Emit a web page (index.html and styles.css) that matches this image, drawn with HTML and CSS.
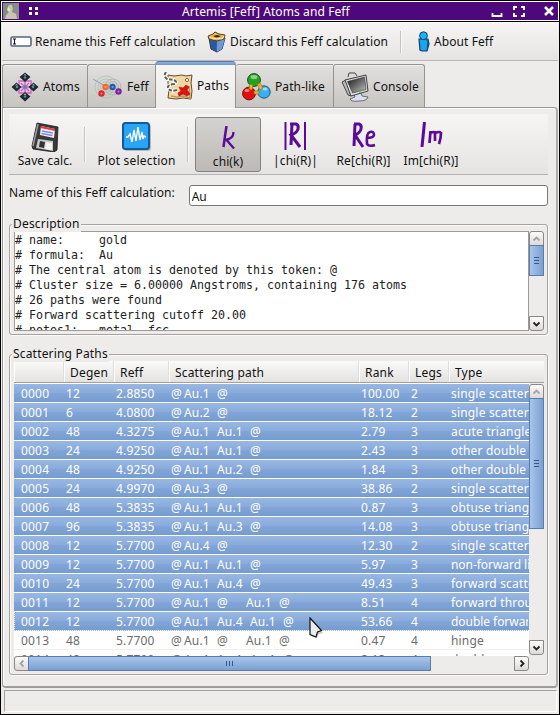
FILE: index.html
```html
<!DOCTYPE html>
<html lang="en">
<head>
<meta charset="utf-8">
<title>Artemis [Feff] Atoms and Feff</title>
<link rel="stylesheet" href="styles.css">
</head>
<body>
<div class="window">
  <header class="titlebar">
    <svg class="avatar" width="16" height="16" viewBox="0 0 16 16"><rect width="16" height="16" fill="#7d8c7c"/><rect x="11" width="5" height="16" fill="#8d8b92"/><path d="M5 3q2-2 4-1l1 4-1 3 4 2 1 5H2l1-4 3-3z" fill="#c9c4b0"/><path d="M5 4l-1 3 2 2 1-3z" fill="#ece6cf"/></svg>
    <svg class="dots" width="10" height="10" viewBox="0 0 10 10"><path d="M1 1h3v3H1zM7 1h3v3H7zM1 6h3v3H1zM7 6h3v3H7z" fill="#fff"/></svg>
    <h1 class="title">Artemis [Feff] Atoms and Feff</h1>
    <svg class="winbtns" width="64" height="12" viewBox="0 0 64 12" fill="none" stroke="#fff" stroke-width="2"><path d="M1.500 8v3h9V8" stroke-width="1.800"/><path d="M23 5V2h3M30 2h3v3M33 8v3h-3M26 11h-3V8" stroke-width="2"/><path d="M54 2l8 8M62 2l-8 8" stroke-width="2.500"/></svg>
  </header>

  <nav class="toolbar">
    <svg class="ic-rename" width="22" height="11" viewBox="0 0 22 11"><rect x="1" y="1" width="20" height="9" rx="1.500" fill="#fff" stroke="#56667f" stroke-width="1.600"/><path d="M3 3h3M4.500 3v5M3 8h3" stroke="#111" fill="none"/></svg>
    <span class="t-rename">Rename this Feff calculation</span>
    <svg class="ic-discard" width="20" height="22" viewBox="0 0 20 22"><path d="M2 7l2 11 6 3 5-3 3-11-8 3z" fill="#3e6eb4" stroke="#1d2f50"/><path d="M10 10v11l5-3 3-11z" fill="#6c9ad8"/><path d="M10 11l-1 9-4-2-2-9z" fill="#2e5797"/><path d="M1 5l5-2 2-2 4 2 6 1-1 4-7 2-8-2z" fill="#e9b95a" stroke="#5b3d14"/><path d="M6 5l4-1 4 1-4 2z" fill="#3b2a14"/><path d="M3 6l3 2 4-1 5 1 2-3" stroke="#fff1c3" fill="none"/></svg>
    <span class="t-discard">Discard this Feff calculation</span>
    <i class="vsep"></i>
    <svg class="ic-about" width="13" height="22" viewBox="0 0 13 22" stroke="#153d5c"><path d="M2 8h9l1 5-2 7H5L3 19z" fill="#1aa5f4" stroke-width="1.200"/><path d="M9 9h2l-1 10" stroke="#0a587f" fill="none"/><circle cx="6.500" cy="4.700" r="3.900" fill="#1cb0fb"/></svg>
    <span class="t-about">About Feff</span>
  </nav>

  <nav class="tabs">
    <div class="tab tab-atoms">
      <svg width="28" height="30" viewBox="0 0 28 30"><g fill="none" stroke="#d35cc9" stroke-width="1.300"><path d="M8 9h12v12H8zM10 11l8 8M18 11l-8 8M14 9v12M8 15h12"/></g><g fill="#22272b"><path d="M14 .5l5.500 4.500-5.500 5-5.500-5zM14 20l5.500 4.500-5.500 5-5.500-5zM5.500 10.500l5 4.500-5 4.500L.5 15zM22.500 10.500l5 4.500-5 4.500-5-4.500z"/></g><g fill="#9a9fa4"><path d="M14 1.500l1.500 2h-3zM5.500 11.500l1.500 2H4zM22.500 11.500l1.500 2h-3zM14 21l1.500 2h-3z"/></g><g fill="#2e9ab7"><circle cx="14" cy="5.500" r="1.300"/><circle cx="14" cy="24.500" r="1.300"/><circle cx="6" cy="15" r="1.300"/><circle cx="22" cy="15" r="1.300"/><circle cx="14" cy="15" r="1.500"/></g></svg>
      <span>Atoms</span>
    </div>
    <div class="tab tab-feff">
      <svg width="30" height="24" viewBox="0 0 30 24"><g fill="none" stroke="#a9c3ac" stroke-width=".8"><circle cx="13" cy="12" r="11"/><circle cx="13" cy="12" r="8"/><circle cx="13" cy="12" r="5.500"/></g><g fill="none" stroke="#a9a9af" stroke-width=".7"><circle cx="20" cy="12" r="8"/><circle cx="20" cy="12" r="5.500"/></g><path d="M0 4l12 7" stroke="#8e9bd5"/><circle cx="12.500" cy="12" r="3.200" fill="#f06a22"/><circle cx="19.500" cy="12" r="3.200" fill="#2558b4"/><circle cx="8.500" cy="18.500" r="3.200" fill="#df2530"/><circle cx="25.500" cy="16.500" r="3.200" fill="#7b2599"/><g fill="#fff" opacity=".45"><circle cx="12.500" cy="12" r="1"/><circle cx="19.500" cy="12" r="1"/><circle cx="8.500" cy="18.500" r="1"/><circle cx="25.500" cy="16.500" r="1"/></g></svg>
      <span>Feff</span>
    </div>
    <div class="tab tab-paths active">
      <svg width="31" height="29" viewBox="0 0 31 29"><path d="M5 3l6 1 8-1 4 1 6-1-1 8 1 8-1 8-8-1-7 1-8-1 1-8-1-7z" fill="#f0d8a6" stroke="#6b4a24"/><path d="M8 24l6 1 6-1 7 2-1-12" stroke="#c2965a" fill="none" stroke-width="1.500"/><path d="M3 0q-3 4 1 7l7 1q4 2 0 4-7 1-6 4 2 4 9 2" fill="none" stroke="#fff" stroke-width="3.500"/><path d="M3 0q-3 4 1 7l7 1q4 2 0 4-7 1-6 4 2 4 9 2" fill="none" stroke="#5c5d5a" stroke-width="2" stroke-dasharray="3.500 1.500"/><circle cx="24" cy="8" r="1.600" fill="#fff" stroke="#806039"/><path d="M16 15l4 1 3-3 3 2-2 3 3 4-3 2-4-2-4 2-1-3 3-2z" fill="#e01212" stroke="#9c1208" stroke-width=".6"/></svg>
      <span>Paths</span>
    </div>
    <div class="tab tab-pathlike">
      <svg width="29" height="28" viewBox="0 0 29 28"><circle cx="12" cy="7" r="6.400" fill="#22a21f" stroke="#174f16"/><circle cx="7" cy="20.500" r="6.400" fill="#e30d12" stroke="#7b0c0c"/><circle cx="22" cy="19" r="6.200" fill="#3ab0f4" stroke="#1c5379"/><path d="M8 11l3 1-1 5-3-1zM15 11l3-1 3 5-3 2zM12 18h5v3h-5z" fill="#eeb12c" stroke="#9a6a13" stroke-width=".6"/><g fill="#fff" opacity=".5"><ellipse cx="12" cy="4" rx="3.500" ry="2"/><ellipse cx="5" cy="17.500" rx="2.500" ry="1.500"/><ellipse cx="23" cy="16" rx="2.500" ry="1.500"/></g></svg>
      <span>Path-like</span>
    </div>
    <div class="tab tab-console">
      <svg width="29" height="30" viewBox="0 0 29 30"><defs><linearGradient id="scr" x1="0" y1="0" x2="1" y2="1"><stop offset="0" stop-color="#151515"/><stop offset="1" stop-color="#c2c2c2"/></linearGradient></defs><path d="M7 5l1-4h6l2 3" fill="#ddd" stroke="#444"/><path d="M13 22l7-1 1 3 6 1q-1 4-9 4-8 1-9-2l5-2z" fill="#dcdcf4" stroke="#555" stroke-width=".8"/><path d="M1 10l4-2 5 16-3-1z" fill="#bbb" stroke="#444"/><path d="M4 8l21-5 2 16-17 5z" fill="#e4e4e4" stroke="#3d3d3d"/><path d="M6.500 9.500L23.500 5l1.500 12.500-13.500 3.500z" fill="url(#scr)" stroke="#333" stroke-width=".6"/><circle cx="19" cy="20" r="1" fill="#5ad32f"/></svg>
      <span>Console</span>
    </div>
  </nav>

  <main class="page">
    <div class="actions">
      <div class="act act-save">
        <svg width="28" height="30" viewBox="0 0 28 30"><path d="M6 1l21 4-1 23-3 2-21-3-1-3z" fill="#393939" stroke="#1b1b1b" stroke-width=".8"/><path d="M7 2l-5 22" stroke="#9c9c9c" stroke-width="1.500"/><path d="M10 4l14 3-1 9-14-3z" fill="#f5f2ff"/><path d="M10 4l14 3v2L9.500 6z" fill="#e4383b"/><path d="M11 9l11 2M10.500 11.500l11 2" stroke="#8184e0" stroke-width="1.500"/><path d="M7 17l15 2v10L5 26z" fill="#c9c9c9"/><path d="M9 19l5 1-1 6-5-1z" fill="#333"/><path d="M15 20l6 1v7l-7-1z" fill="#f4f4f4"/></svg>
        <span>Save calc.</span>
      </div>
      <i class="vsep"></i>
      <div class="act act-plot">
        <svg width="29" height="29" viewBox="0 0 29 29"><rect x="2" y="2" width="27" height="27" rx="3" fill="#999" opacity=".6"/><rect x="1" y="1" width="26" height="26" rx="2.500" fill="#2aa4f4" stroke="#145a9b" stroke-width="2"/><path d="M4 15h2l2-3 2 8 2-12 2 11 2-14 2 13 2-8 1 7 1-3 2 1" fill="none" stroke="#fff" stroke-width="1.400"/></svg>
        <span>Plot selection</span>
      </div>
      <i class="vsep"></i>
      <div class="act act-chik pressed">
        <svg width="13" height="24" viewBox="0 0 13 24" fill="none" stroke="#5b0c97" stroke-width="2.500"><path d="M4.500 0L3 10 1.500 21"/><path d="M11.500 6q0 7-8.500 8M5 14.500l7 8" stroke-width="2.300"/></svg>
        <span>chi(k)</span>
      </div>
      <div class="act act-mag">
        <svg width="23" height="29" viewBox="0 0 23 29" fill="none" stroke="#5b0c97" stroke-width="2"><path d="M1.500 0v28M21 0v28"/><path d="M8 2L7 23M6 2h6q3 1 2 5-1 4-7 6l9 12" stroke-width="3"/></svg>
        <span>|chi(R)|</span>
      </div>
      <div class="act act-re">
        <svg width="24" height="27" viewBox="0 0 24 27" fill="none" stroke="#5b0c97" stroke-width="3"><path d="M3 2L2 24M2 2h5q3 1 2 5-1 4-6 6l8 12"/><path d="M14.500 16q7 0 7.500-3 0-4-4-3-4 1-3 12 2 3 8 1" stroke-width="2.600"/></svg>
        <span>Re[chi(R)]</span>
      </div>
      <div class="act act-im">
        <svg width="23" height="25" viewBox="0 0 23 25" fill="none" stroke="#5b0c97" stroke-width="3"><path d="M4.500 0L2 25"/><path d="M10.500 9L9.500 21M10 11q5-2 5 0v8M15 11q5-2 6 0 0 5-2 11" stroke-width="2.700"/></svg>
        <span>Im[chi(R)]</span>
      </div>
    </div>

    <div class="namerow">
      <label for="calc">Name of this Feff calculation:</label>
      <input id="calc" type="text" value="Au">
    </div>

    <section class="group desc">
      <h2>Description</h2>
      <pre class="notes"># name:     gold
# formula:  Au
# The central atom is denoted by this token: @
# Cluster size = 6.00000 Angstroms, containing 176 atoms
# 26 paths were found
# Forward scattering cutoff 20.00
# notes1:   metal, fcc</pre>
      <div class="vbar">
        <div class="btn off"><svg width="9" height="6" viewBox="0 0 9 6"><path d="M1.500 4.500l3-3 3 3"/></svg></div>
        <div class="thumb"><svg width="5" height="7" viewBox="0 0 5 7"><path d="M0 .5h5M0 3.500h5M0 6.500h5"/></svg></div>
        <div class="trough"></div>
        <div class="btn down"><svg width="9" height="6" viewBox="0 0 9 6"><path d="M1.500 1.500l3 3 3-3"/></svg></div>
      </div>
    </section>

    <section class="group paths">
      <h2>Scattering Paths</h2>
      <div class="cols head"><span></span><span>Degen</span><span>Reff</span><span>Scattering path</span><span>Rank</span><span>Legs</span><span>Type</span></div>
      <div class="listwrap">
        <div class="list">
          <div class="cols row sel"><span>0000</span><span>12</span><span>2.8850</span><span class="p"><b>@</b><u>Au.1</u><b>@</b></span><span>100.00</span><span>2</span><span>single scattering</span></div>
          <div class="cols row sel"><span>0001</span><span>6</span><span>4.0800</span><span class="p"><b>@</b><u>Au.2</u><b>@</b></span><span>18.12</span><span>2</span><span>single scattering</span></div>
          <div class="cols row sel"><span>0002</span><span>48</span><span>4.3275</span><span class="p"><b>@</b><u>Au.1</u><u>Au.1</u><b>@</b></span><span>2.79</span><span>3</span><span>acute triangle</span></div>
          <div class="cols row sel"><span>0003</span><span>24</span><span>4.9250</span><span class="p"><b>@</b><u>Au.1</u><u>Au.1</u><b>@</b></span><span>2.43</span><span>3</span><span>other double scattering</span></div>
          <div class="cols row sel"><span>0004</span><span>48</span><span>4.9250</span><span class="p"><b>@</b><u>Au.1</u><u>Au.2</u><b>@</b></span><span>1.84</span><span>3</span><span>other double scattering</span></div>
          <div class="cols row sel"><span>0005</span><span>24</span><span>4.9970</span><span class="p"><b>@</b><u>Au.3</u><b>@</b></span><span>38.86</span><span>2</span><span>single scattering</span></div>
          <div class="cols row sel"><span>0006</span><span>48</span><span>5.3835</span><span class="p"><b>@</b><u>Au.1</u><u>Au.1</u><b>@</b></span><span>0.87</span><span>3</span><span>obtuse triangle</span></div>
          <div class="cols row sel"><span>0007</span><span>96</span><span>5.3835</span><span class="p"><b>@</b><u>Au.1</u><u>Au.3</u><b>@</b></span><span>14.08</span><span>3</span><span>obtuse triangle</span></div>
          <div class="cols row sel"><span>0008</span><span>12</span><span>5.7700</span><span class="p"><b>@</b><u>Au.4</u><b>@</b></span><span>12.30</span><span>2</span><span>single scattering</span></div>
          <div class="cols row sel"><span>0009</span><span>12</span><span>5.7700</span><span class="p"><b>@</b><u>Au.1</u><u>Au.1</u><b>@</b></span><span>5.97</span><span>3</span><span class="tight">non-forward linear</span></div>
          <div class="cols row sel"><span>0010</span><span>24</span><span>5.7700</span><span class="p"><b>@</b><u>Au.1</u><u>Au.4</u><b>@</b></span><span>49.43</span><span>3</span><span>forward scattering</span></div>
          <div class="cols row sel"><span>0011</span><span>12</span><span>5.7700</span><span class="p"><b>@</b><u>Au.1</u><b class="mid">@</b><u>Au.1</u><b>@</b></span><span>8.51</span><span>4</span><span>forward through absorber</span></div>
          <div class="cols row sel focus"><span>0012</span><span>12</span><span>5.7700</span><span class="p"><b>@</b><u>Au.1</u><u>Au.4</u><u>Au.1</u><b>@</b></span><span>53.66</span><span>4</span><span class="tight">double forward</span></div>
          <div class="cols row"><span>0013</span><span>48</span><span>5.7700</span><span class="p"><b>@</b><u>Au.1</u><b class="mid">@</b><u>Au.1</u><b>@</b></span><span>0.47</span><span>4</span><span>hinge</span></div>
          <div class="cols row"><span>0014</span><span>48</span><span>5.7700</span><span class="p"><b>@</b><u>Au.1</u><u>Au.1</u><u>Au.1</u><b>@</b></span><span>2.13</span><span>4</span><span>double</span></div>
        </div>
        <div class="vbar">
          <div class="btn off"><svg width="9" height="6" viewBox="0 0 9 6"><path d="M1.500 4.500l3-3 3 3"/></svg></div>
          <div class="thumb"><svg width="5" height="7" viewBox="0 0 5 7"><path d="M0 .5h5M0 3.500h5M0 6.500h5"/></svg></div>
          <div class="trough"></div>
          <div class="btn down"><svg width="9" height="6" viewBox="0 0 9 6"><path d="M1.500 1.500l3 3 3-3"/></svg></div>
        </div>
      </div>
      <div class="hbar">
        <div class="btn off"><svg width="6" height="9" viewBox="0 0 6 9"><path d="M4.500 1.500l-3 3 3 3"/></svg></div>
        <div class="thumb"><svg width="7" height="5" viewBox="0 0 7 5"><path d="M.5 0v5M3.500 0v5M6.500 0v5"/></svg></div>
        <div class="trough"></div>
        <div class="btn right"><svg width="6" height="9" viewBox="0 0 6 9"><path d="M1.500 1.500l3 3-3 3"/></svg></div>
      </div>
    </section>
  </main>

  <footer class="status"></footer>
  <svg class="cursor" width="16" height="24" viewBox="0 0 16 24"><path d="M2 3l12 13-4 1-2 4-6-2z" fill="#777" opacity=".4"/><path d="M1 1l11.500 12.500-4 1.500-1.500 5-6-2.500z" fill="#ececec" stroke="#111" stroke-width="1.200"/></svg>
</div>
</body>
</html>
```
FILE: styles.css
```css
* { box-sizing: border-box; }
body {
  margin: 0;
  width: 560px;
  height: 715px;
  overflow: hidden;
  font: 12px/16px "Noto Sans", "Open Sans", sans-serif;
  color: #111;
  background: #000;
}
svg { display: block; flex: none; }
span, label, h1, h2 { white-space: nowrap; }

.window {
  position: relative;
  width: 560px;
  height: 715px;
  border: 1px solid #000;
  background: #edeceb;
  display: flex;
  flex-direction: column;
}
.titlebar {
  height: 20px;
  border: 1px solid #fff;
  box-shadow: 0 1px #000;
  background: #4d097c;
  display: flex;
  align-items: center;
  padding: 0 3px 0 1px;
  margin-bottom: 1px;
  flex: none;
}
.dots { margin-left: 9px; }
.title {
  flex: 1;
  margin: 0 0 0 144px;
  font-size: 12px;
  font-weight: 400;
  line-height: 17px;
  color: #fff;
  letter-spacing: .1px;
}

.toolbar {
  height: 39px;
  margin: 0 1px;
  padding-left: 8px;
  flex: none;
  display: flex;
  align-items: center;
  background: linear-gradient(#f6f5f4, #e5e4e2);
  border-bottom: 1px solid #b7b5b3;
  border-top: 1px solid #fff;
}
.toolbar span { margin-left: 3px; margin-top: 1px; letter-spacing: .08px; }
.toolbar .t-rename { width: 172px; }
.toolbar .t-discard { width: 170px; letter-spacing: .14px; }
.vsep { width: 2px; background: #c4c2bf; border-right: 1px solid #fafafa; flex: none; }
.toolbar .vsep { height: 22px; margin-right: 15px; }
.toolbar .t-about { margin-left: 4px; }

.tabs {
  height: 46px;
  margin-left: 1px;
  flex: none;
  display: flex;
  align-items: flex-end;
}
.tab {
  height: 43px;
  padding-top: 2px;
  display: flex;
  align-items: center;
  border: 1px solid #96938f;
  border-right: 0;
  border-bottom: 0;
  border-radius: 3px 0 0 0;
  background: linear-gradient(#e2e0de, #c7c5c2);
  box-shadow: inset 0 1px #f0efee;
}
.tab span { margin-left: 4px; letter-spacing: .1px; }
.tab-atoms { width: 85px; padding-left: 8px; }
.tab-feff { width: 68px; padding-left: 5px; }
.tab-paths { width: 81px; padding-left: 7px; }
.tab-pathlike { width: 97px; padding-left: 6px; border-left: 0; }
.tab-console { width: 92px; padding-left: 7px; border-right: 1px solid #96938f; border-radius: 3px 3px 0 0; }
.tab-console span { margin-left: 3px; }
.tab.active {
  height: 47px;
  margin-bottom: -1px;
  border: 1px solid #5c7ba8;
  border-left-color: #96938f;
  border-right-color: #96938f;
  border-bottom: 0;
  border-radius: 4px 4px 0 0;
  background: linear-gradient(#8fb0df 0, #7097d0 3px, #f5f5f4 3px, #edeceb);
  box-shadow: none;
  position: relative;
}
.tab.active span { margin-left: 3px; }

.page {
  height: 581px;
  flex: none;
  margin: 0 1px;
  padding: 6px 8px 0 6px;
  border: 1px solid #9a9793;
  border-width: 1px 2px 2px 1px;
  border-right-color: #b0aeab;
  border-bottom-color: #9f9c99;
  border-radius: 0 4px 4px 4px;
  box-shadow: inset 1px 1px #fff;
}
.actions {
  height: 61px;
  display: flex;
  align-items: flex-start;
  background: linear-gradient(#f6f5f4, #e5e4e2);
  border-bottom: 1px solid #b7b5b3;
}
.act {
  display: flex;
  flex-direction: column;
  align-items: center;
  padding-top: 8px;
  height: 60px;
}
.act span { margin-top: auto; padding-bottom: 5px; letter-spacing: .08px; }
.actions .vsep { height: 35px; margin-top: 13px; }
.act-save { width: 70px; margin-left: 1px; margin-right: 4px; }
.act-plot { width: 101px; }
.act-plot span { letter-spacing: .2px; }
.act.pressed {
  width: 66px;
  height: 55px;
  margin: 3px 0 0 6px;
  border: 1px solid #84817e;
  border-radius: 3px;
  background: linear-gradient(#d5d3d1, #bcb9b6);
}
.act.pressed span { padding-bottom: 1px; }
.act-mag { width: 69px; }
.act-re { width: 67px; }
.act-im { width: 68px; }

.namerow {
  height: 21px;
  margin-top: 10px;
  display: flex;
  align-items: flex-start;
}
.namerow label { width: 180px; letter-spacing: .08px; }
.namerow input {
  width: 360px;
  height: 21px;
  margin: 0;
  padding: 2px 2px 0;
  border: 1px solid #7b7874;
  border-radius: 3px;
  background: #fff;
  font: inherit;
  color: #111;
}

.group {
  position: relative;
  border: 1px solid #a5a29f;
  border-radius: 3px;
  width: 539px;
  box-shadow: inset 1px 1px #fafafa, 1px 1px #fafafa;
}
.group h2 {
  position: absolute;
  top: -9px;
  left: 2px;
  margin: 0;
  padding: 0 1px;
  font-size: 12px;
  font-weight: 400;
  line-height: 16px;
  letter-spacing: .18px;
  background: #edeceb;
}
.desc {
  height: 111px;
  margin-top: 18px;
  padding: 6px 3px 0 4px;
  display: flex;
}
.notes {
  margin: 0;
  width: 515px;
  height: 100px;
  padding-top: 1px;
  border: 1px solid #9d9a97;
  overflow: hidden;
  background: #fff;
  color: #222;
  font: 11.630px/15px "DejaVu Sans Mono", monospace;
}
.vbar { width: 15px; display: flex; flex-direction: column; background: #edeceb; }
.desc .vbar { height: 100px; }
.btn {
  width: 15px;
  height: 15px;
  flex: none;
  display: flex;
  align-items: center;
  justify-content: center;
  border: 1px solid #8a8784;
  background: linear-gradient(#fbfbfa, #dddbd9);
}
.btn svg { fill: none; stroke: #222; stroke-width: 1.800; }
.btn.off svg { stroke: #a5a3a0; }
.vbar .btn { border-radius: 3px 3px 0 0; }
.vbar .btn.down { border-radius: 0 0 3px 3px; }
.hbar .btn { border-radius: 3px 0 0 3px; }
.hbar .btn.right { border-radius: 0 3px 3px 0; }
.thumb {
  flex: none;
  display: flex;
  align-items: center;
  justify-content: center;
  border: 1px solid #5a7cac;
  background: linear-gradient(90deg, #a9c5ea, #7ba0d3);
}
.thumb svg { stroke: #35588c; stroke-width: 1; fill: none; }
.trough { flex: 1; }
.desc .thumb { height: 31px; margin-top: -1px; }

.paths {
  height: 321px;
  margin-top: 19px;
  padding: 6px 3px 0 4px;
}
.cols { display: grid; grid-template-columns: 50px 50px 55px 190px 50px 40px 1fr; }
.head {
  width: 530px;
  height: 22px;
  background: linear-gradient(#fafafa, #e3e2e0);
  border-bottom: 1px solid #a3a09d;
  line-height: 24px;
  letter-spacing: .18px;
}
.head span { height: 21px; padding-left: 5px; border-left: 1px solid #fff; box-shadow: -1px 0 #e0dedc; }
.head span:first-child { box-shadow: none; }
.listwrap { display: flex; height: 273px; }
.list {
  width: 515px;
  height: 273px;
  padding-top: 1px;
  overflow: hidden;
  background: #fff;
}
.row { height: 19px; line-height: 19px; border-bottom: 1px solid #f0f0ef; color: #6b6b6b; letter-spacing: .18px; }
.row.sel {
  color: #fff;
  border-bottom-color: #fff;
  background: linear-gradient(#98b7e3, #8aabdb 48%, #82a5d7 50%, #769ccf);
}
.row.focus { border-bottom: 1px dotted #fff; border-left: 1px dotted #fff; }
.row.focus > span { position: relative; left: -1px; }
.row > span { padding-left: 2px; overflow: hidden; }
.row > span:first-child { padding-left: 7px; }
.row > .tight { letter-spacing: -.05px; }
.p { display: flex; }
.p b { font-weight: 400; width: 13px; }
.p u { text-decoration: none; width: 33px; }
.p .mid { width: 29px; }
.listwrap .vbar { height: 272px; padding-top: 1px; }
.listwrap .thumb { height: 131px; margin-top: -1px; }
.hbar { width: 515px; height: 15px; display: flex; }
.hbar .thumb { width: 403px; margin-left: -1px; background: linear-gradient(#a9c5ea, #7ba0d3); }

.status {
  height: 22px;
  margin: 2px 2px 0 3px;
  border: 1px solid #a3a09d;
  border-right-color: #fff;
  border-bottom-color: #fff;
}
.cursor { position: absolute; left: 308px; top: 616px; }
```
